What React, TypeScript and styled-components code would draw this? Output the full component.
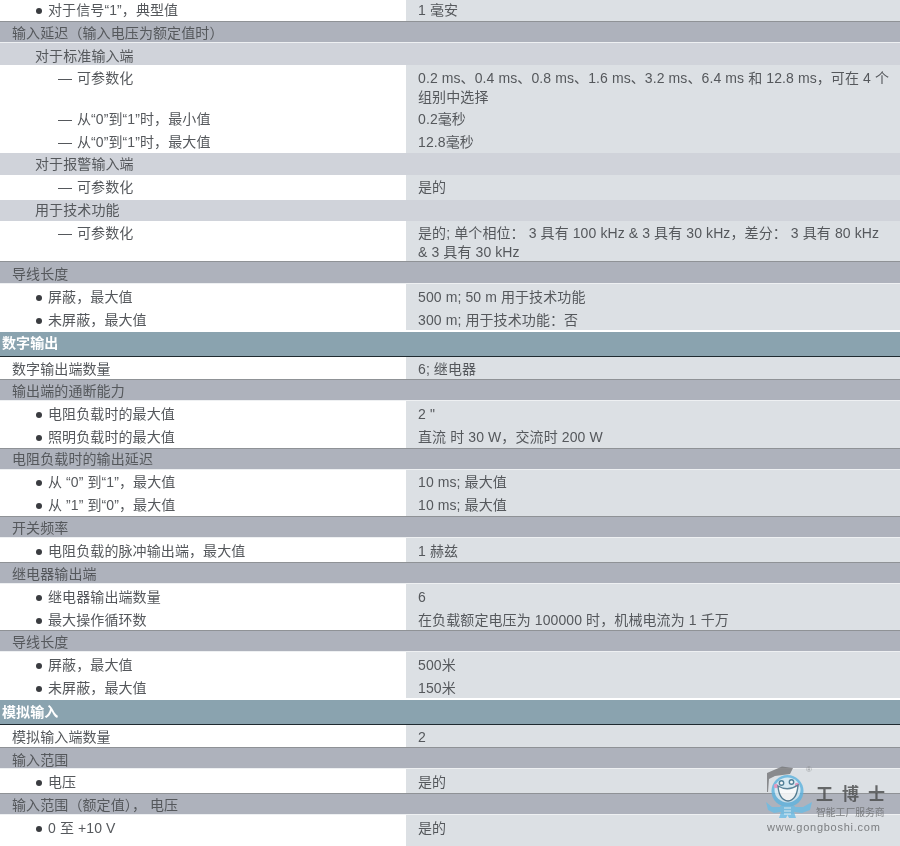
import React from 'react';
import styled, {createGlobalStyle} from "styled-components";

const GlobalStyle = createGlobalStyle`
    html, body {
        margin: 0;
        padding: 0;
        background: #fff;
    }
    body {
        font-family: "Liberation Sans", "Noto Sans CJK SC", sans-serif;
        font-size: 14px;
        color: #55585c;
        overflow: hidden;
    }
`

type RowData =
    | { kind: 'section' | 'group' | 'sub'; label: string; h: number; pad: number }
    | { kind: 'data'; level: 0 | 1 | 2; label: string; value: string; h: number; pad: number };

const rows: RowData[] = [
    {kind: 'data', level: 1, label: '对于信号“1”，典型值', value: '1 毫安', h: 21, pad: 1},
    {kind: 'group', label: '输入延迟（输入电压为额定值时）', h: 22, pad: 2},
    {kind: 'sub', label: '对于标准输入端', h: 22, pad: 4},
    {kind: 'data', level: 2, label: '可参数化', value: '0.2 ms、0.4 ms、0.8 ms、1.6 ms、3.2 ms、6.4 ms 和 12.8 ms，可在 4 个组别中选择', h: 43, pad: 4},
    {kind: 'data', level: 2, label: '从“0”到“1”时，最小值', value: '0.2毫秒', h: 23, pad: 2},
    {kind: 'data', level: 2, label: '从“0”到“1”时，最大值', value: '12.8毫秒', h: 22, pad: 2},
    {kind: 'sub', label: '对于报警输入端', h: 22, pad: 2},
    {kind: 'data', level: 2, label: '可参数化', value: '是的', h: 25, pad: 3},
    {kind: 'sub', label: '用于技术功能', h: 21, pad: 1},
    {kind: 'data', level: 2, label: '可参数化', value: '是的; 单个相位： 3 具有 100 kHz & 3 具有 30 kHz，差分： 3 具有 80 kHz & 3 具有 30 kHz', h: 40, pad: 3},
    {kind: 'group', label: '导线长度', h: 23, pad: 3},
    {kind: 'data', level: 1, label: '屏蔽，最大值', value: '500 m; 50 m 用于技术功能', h: 23, pad: 4},
    {kind: 'data', level: 1, label: '未屏蔽，最大值', value: '300 m; 用于技术功能：否', h: 23, pad: 4},
    {kind: 'section', label: '数字输出', h: 27, pad: 2},
    {kind: 'data', level: 0, label: '数字输出端数量', value: '6; 继电器', h: 22, pad: 3},
    {kind: 'group', label: '输出端的通断能力', h: 22, pad: 2},
    {kind: 'data', level: 1, label: '电阻负载时的最大值', value: '2 "', h: 23, pad: 4},
    {kind: 'data', level: 1, label: '照明负载时的最大值', value: '直流 时 30 W，交流时 200 W', h: 24, pad: 4},
    {kind: 'group', label: '电阻负载时的输出延迟', h: 22, pad: 1},
    {kind: 'data', level: 1, label: '从 “0” 到“1”，最大值', value: '10 ms; 最大值', h: 23, pad: 3},
    {kind: 'data', level: 1, label: '从 ”1” 到“0”，最大值', value: '10 ms; 最大值', h: 23, pad: 3},
    {kind: 'group', label: '开关频率', h: 22, pad: 2},
    {kind: 'data', level: 1, label: '电阻负载的脉冲输出端，最大值', value: '1 赫兹', h: 24, pad: 4},
    {kind: 'group', label: '继电器输出端', h: 22, pad: 2},
    {kind: 'data', level: 1, label: '继电器输出端数量', value: '6', h: 23, pad: 4},
    {kind: 'data', level: 1, label: '最大操作循环数', value: '在负载额定电压为 100000 时，机械电流为 1 千万', h: 23, pad: 4},
    {kind: 'group', label: '导线长度', h: 22, pad: 2},
    {kind: 'data', level: 1, label: '屏蔽，最大值', value: '500米', h: 23, pad: 4},
    {kind: 'data', level: 1, label: '未屏蔽，最大值', value: '150米', h: 23, pad: 4},
    {kind: 'section', label: '模拟输入', h: 27, pad: 3},
    {kind: 'data', level: 0, label: '模拟输入端数量', value: '2', h: 22, pad: 3},
    {kind: 'group', label: '输入范围', h: 22, pad: 3},
    {kind: 'data', level: 1, label: '电压', value: '是的', h: 24, pad: 4},
    {kind: 'group', label: '输入范围（额定值）， 电压', h: 22, pad: 2},
    {kind: 'data', level: 1, label: '0 至 +10 V', value: '是的', h: 31, pad: 4},
];

const Logo = () => (
    <Watermark>
        <svg width="50" height="56" viewBox="0 0 50 56">
            <path d="M2 8 L17 1.5 L28 3 L25 9 L10 11 L4 14 L3 27 L2 27 Z" fill="#77787a"/>
            <ellipse cx="22.5" cy="26" rx="16" ry="16" fill="#5fb4df"/>
            <ellipse cx="22.5" cy="25" rx="13" ry="12.5" fill="#d6ecf6"/>
            <circle cx="16.5" cy="18" r="2.2" fill="#fff" stroke="#356c88" strokeWidth="1.4"/>
            <circle cx="26.5" cy="17" r="2.2" fill="#fff" stroke="#356c88" strokeWidth="1.4"/>
            <circle cx="11" cy="21" r="2.2" fill="#e58bb8"/>
            <circle cx="32" cy="20" r="2.2" fill="#e58bb8"/>
            <path d="M13 21 Q23 27 33 20 Q32 35 23 36 Q14 35 13 21 Z" fill="#fff" stroke="#3f6f88" strokeWidth="1.4"/>
            <path d="M15 41 L30 41 L29 47 L31 53 L24 53 L22.5 50 L21 53 L14 53 L16 47 Z" fill="#6dbce4"/>
            <path d="M16 42 L7 42 L1 37 L3 45 L9 48 L16 47 Z" fill="#6dbce4"/>
            <path d="M29 42 L38 42 L47 37 L45 45 L37 48 L29 47 Z" fill="#6dbce4"/>
            <path d="M19 43 H26 M19 46 H26 M19 49 H26" stroke="#e4f3fa" strokeWidth="1.2"/>
        </svg>
        <Registered>®</Registered>
        <BrandBlock>
            <BrandName>工博士</BrandName>
            <BrandSlogan>智能工厂服务商</BrandSlogan>
        </BrandBlock>
        <BrandUrl>www.gongboshi.com</BrandUrl>
    </Watermark>
);

const App = () => {
    return (
        <Page>
            <GlobalStyle/>
            {rows.map((row, i) => {
                if (row.kind === 'section') return <SectionRow key={i} $h={row.h} $pad={row.pad}>{row.label}</SectionRow>;
                if (row.kind === 'group') return <GroupRow key={i} $h={row.h} $pad={row.pad}>{row.label}</GroupRow>;
                if (row.kind === 'sub') return <SubRow key={i} $h={row.h} $pad={row.pad}>{row.label}</SubRow>;
                return (
                    <DataRow key={i} $h={row.h} $pad={0}>
                        <LabelCell $level={row.level} $pad={row.pad}>
                            {row.level === 1 && <Bullet/>}
                            {row.level === 2 && <Dash>—</Dash>}
                            <span>{row.label}</span>
                        </LabelCell>
                        <ValueCell $pad={row.pad}>{row.value}</ValueCell>
                    </DataRow>
                );
            })}
            <Logo/>
        </Page>
    );
};

export default App;

const Page = styled.div`
    position: relative;
    width: 900px;
    height: 846px;
    overflow: hidden;
    letter-spacing: 0.1px;
    filter: blur(0.3px);
`

const BaseRow = styled.div<{ $h: number; $pad: number }>`
    box-sizing: border-box;
    height: ${props => props.$h}px;
    padding-top: ${props => props.$pad}px;
    line-height: 18.5px;
    white-space: nowrap;
`

const SectionRow = styled(BaseRow)`
    padding-left: 2px;
    background-color: #8aa3af;
    border-top: 2px solid #fff;
    border-bottom: 1px solid #1f2a30;
    color: #fff;
    font-weight: 700;
`

const GroupRow = styled(BaseRow)`
    padding-left: 12px;
    background-color: #aeb2bc;
    border-top: 1px solid #8f9296;
    border-bottom: 1px solid #eef0f2;
`

const SubRow = styled(BaseRow)`
    padding-left: 35px;
    background-color: #d0d3da;
`

const DataRow = styled(BaseRow)`
    display: grid;
    grid-template-columns: 406px 1fr;
    background-color: #fff;
`

const LabelCell = styled.div<{ $level: number; $pad: number }>`
    display: flex;
    align-items: baseline;
    padding: ${props => props.$pad}px 0 0 ${props => [12, 36, 58][props.$level]}px;
`

const Bullet = styled.i`
    flex: none;
    width: 6px;
    height: 6px;
    margin-right: 6px;
    border-radius: 50%;
    background-color: #3a3c40;
    transform: translateY(-1px);
`

const Dash = styled.span`
    flex: none;
    width: 19px;
`

const ValueCell = styled.div<{ $pad: number }>`
    box-sizing: border-box;
    padding: ${props => props.$pad}px 9px 0 12px;
    background-color: #dce0e4;
    white-space: normal;
`

const Watermark = styled.div`
    position: absolute;
    left: 765px;
    top: 765px;
    width: 125px;
    height: 70px;
    opacity: 0.82;
    letter-spacing: normal;
`

const Registered = styled.span`
    position: absolute;
    left: 41px;
    top: 0;
    font-size: 8px;
    color: #8a8c8e;
`

const BrandBlock = styled.div`
    position: absolute;
    left: 51px;
    top: 18px;
    width: 74px;
`

const BrandName = styled.div`
    font-family: "Noto Sans CJK SC", sans-serif;
    font-size: 17px;
    font-weight: 700;
    line-height: 20px;
    letter-spacing: 9px;
    white-space: nowrap;
    color: #4c4d4e;
`

const BrandSlogan = styled.div`
    font-family: "Noto Sans CJK SC", sans-serif;
    font-size: 9.8px;
    line-height: 12px;
    margin-top: 3px;
    white-space: nowrap;
    color: #6a6c6e;
`

const BrandUrl = styled.div`
    position: absolute;
    left: 2px;
    top: 55px;
    font-size: 11px;
    line-height: 14px;
    letter-spacing: 0.75px;
    white-space: nowrap;
    color: #66686a;
`
